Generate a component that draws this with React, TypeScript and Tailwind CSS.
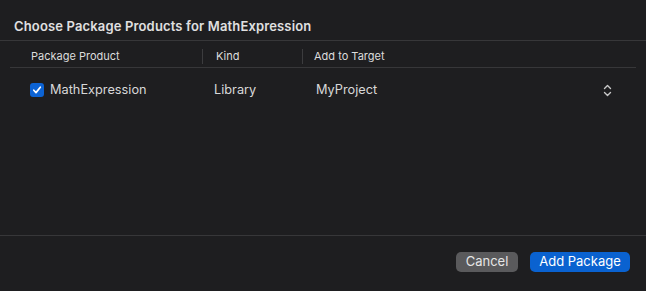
import React from "react";

const App: React.FC = () => {
  return (
    <div
      className="flex flex-col w-[646px] h-[291px] bg-[#1e1e20] text-[#dfdfdf] overflow-hidden"
      style={{ fontFamily: "Inter, 'Noto Sans', sans-serif" }}
    >
      <div className="flex items-center h-[41px] pt-[14px] px-[14px] border-b border-[#373739]">
        <h1 className="text-[13px] font-semibold tracking-[0.15px] text-[#e0e0e0]">
          Choose Package Products for MathExpression
        </h1>
      </div>
      <div className="flex flex-col flex-1 px-[10px]">
        <div className="flex items-center h-[27px] pt-[5px] border-b border-[#373739] text-[11px] text-[#dcdcdc]">
          <div className="w-[192px] pl-[21px]">Package Product</div>
          <div className="w-px h-[15px] bg-[#3c3c3e]" />
          <div className="w-[99px] pl-[13px]">Kind</div>
          <div className="w-px h-[15px] bg-[#3c3c3e]" />
          <div className="flex-1 pl-[11px]">Add to Target</div>
        </div>
        <div className="flex items-center h-[44px] text-[12.75px] text-[#d8d8d8]">
          <div className="flex items-center w-[193px] pl-[20px] gap-[6px]">
            <div className="flex items-center justify-center w-[14px] h-[14px] rounded-[3px] bg-[#0c63d4]">
              <svg width="10" height="10" viewBox="0 0 10 10" fill="none">
                <path
                  d="M1.8 5.2 L4 7.6 L8.3 2.2"
                  stroke="white"
                  strokeWidth="1.7"
                  strokeLinecap="round"
                  strokeLinejoin="round"
                />
              </svg>
            </div>
            <span>MathExpression</span>
          </div>
          <div className="w-[100px] pl-[11px]">Library</div>
          <div className="flex flex-1 items-center justify-between pl-[13px] pr-[24px]">
            <span>MyProject</span>
            <svg width="9" height="13" viewBox="0 0 9 13" fill="none">
              <path
                d="M1.5 4.5 L4.5 1.5 L7.5 4.5 M1.5 8.5 L4.5 11.5 L7.5 8.5"
                stroke="#c9c9c9"
                strokeWidth="1.4"
                strokeLinecap="round"
                strokeLinejoin="round"
              />
            </svg>
          </div>
        </div>
      </div>
      <div className="flex items-center justify-end gap-[12px] h-[56px] pr-[16px] pb-[4px] border-t border-[#373739]">
        <button className="h-[20px] w-[62px] rounded-[5px] bg-[#5a5a5c] text-[13px] text-[#e6e6e6]">
          Cancel
        </button>
        <button className="h-[20px] w-[100px] rounded-[5px] bg-[#0a62d0] text-[13px] text-white">
          Add Package
        </button>
      </div>
    </div>
  );
};

export default App;
